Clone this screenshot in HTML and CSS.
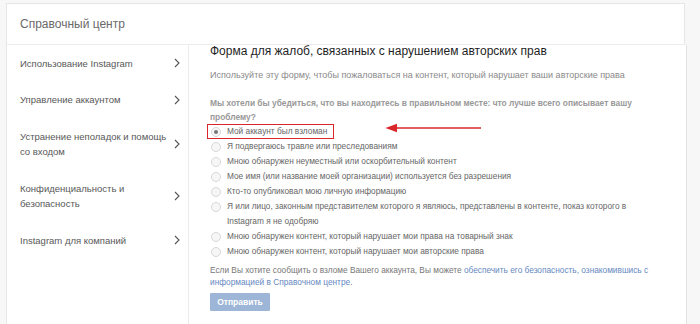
FILE: index.html
```html
<!DOCTYPE html>
<html lang="ru">
<head>
<meta charset="utf-8">
<link rel="stylesheet" href="styles.css">
</head>
<body>
<div class="page">
  <header class="top">Справочный центр</header>
  <div class="layout">
    <nav class="side">
      <a class="nav-item"><span>Использование Instagram</span><svg class="chev" viewBox="0 0 6 10"><path d="M1 1l4 4-4 4"/></svg></a>
      <a class="nav-item"><span>Управление аккаунтом</span><svg class="chev" viewBox="0 0 6 10"><path d="M1 1l4 4-4 4"/></svg></a>
      <a class="nav-item"><span>Устранение неполадок и помощь со входом</span><svg class="chev" viewBox="0 0 6 10"><path d="M1 1l4 4-4 4"/></svg></a>
      <a class="nav-item"><span>Конфиденциальность и безопасность</span><svg class="chev" viewBox="0 0 6 10"><path d="M1 1l4 4-4 4"/></svg></a>
      <a class="nav-item"><span>Instagram для компаний</span><svg class="chev" viewBox="0 0 6 10"><path d="M1 1l4 4-4 4"/></svg></a>
    </nav>
    <main class="main">
      <div class="content">
        <h1 class="title">Форма для жалоб, связанных с нарушением авторских прав</h1>
        <p class="lead">Используйте эту форму, чтобы пожаловаться на контент, который нарушает ваши авторские права</p>
        <p class="question">Мы хотели бы убедиться, что вы находитесь в правильном месте: что лучше всего описывает вашу проблему?</p>
        <ul class="options">
          <li class="opt opt-marked"><span class="radio checked"></span><span>Мой аккаунт был взломан</span></li>
          <li class="opt"><span class="radio"></span><span>Я подвергаюсь травле или преследованиям</span></li>
          <li class="opt"><span class="radio"></span><span>Мною обнаружен неуместный или оскорбительный контент</span></li>
          <li class="opt"><span class="radio"></span><span>Мое имя (или название моей организации) используется без разрешения</span></li>
          <li class="opt"><span class="radio"></span><span>Кто-то опубликовал мою личную информацию</span></li>
          <li class="opt"><span class="radio"></span><span>Я или лицо, законным представителем которого я являюсь, представлены в контенте, показ которого в Instagram я не одобряю</span></li>
          <li class="opt"><span class="radio"></span><span>Мною обнаружен контент, который нарушает мои права на товарный знак</span></li>
          <li class="opt"><span class="radio"></span><span>Мною обнаружен контент, который нарушает мои авторские права</span></li>
        </ul>
        <p class="note">Если Вы хотите сообщить о взломе Вашего аккаунта, Вы можете <a class="link">обеспечить его безопасность, ознакомившись с</a> <a class="link">информацией в Справочном центре</a>.</p>
        <button class="send" type="button">Отправить</button>
        <svg class="arrow" viewBox="0 0 96 12"><path d="M4 6H96" stroke="#d8262b" stroke-width="1.6" fill="none"/><path d="M0.5 6L12 1.8V10.2Z" fill="#d8262b"/></svg>
      </div>
    </main>
  </div>
</div>
</body>
</html>
```

FILE: styles.css
```css
* { box-sizing: border-box; }
html, body { margin: 0; padding: 0; }
body {
  background: #f7f7f7;
  font-family: "Liberation Sans", Arial, sans-serif;
  color: #555;
  width: 700px;
  height: 324px;
  overflow: hidden;
}
.page {
  padding: 3px 0 0 6px;
  width: 687px;
}
.top {
  height: 42px;
  background: #fff;
  border: 1px solid #e6e6e6;
  border-bottom: 1px solid #ececec;
  display: flex;
  align-items: center;
  padding-left: 13px;
  font-size: 12px;
  color: #6a6a6a;
  margin-right: 2px;
}
.layout {
  display: flex;
  background: #fff;
  border-left: 1px solid #e8e8e8;
  border-right: 1px solid #e2e2e2;
  height: 279px;
}
.side {
  width: 182px;
  border-right: 1px solid #ececec;
  padding: 10.5px 8px 0 13px;
  display: flex;
  flex-direction: column;
  gap: 21px;
}
.nav-item {
  display: flex;
  align-items: center;
  justify-content: space-between;
  font-size: 9.5px;
  line-height: 15.5px;
  color: #585858;
}
.nav-item span { max-width: 155px; }
.chev {
  width: 6px;
  height: 10px;
  fill: none;
  stroke: #555;
  stroke-width: 1.1;
  flex: none;
}
.main {
  flex: 1;
  padding-left: 21px;
}
.content {
  position: relative;
  width: 445px;
}
.title {
  margin: 0;
  font-size: 12px;
  line-height: 12px;
  font-weight: normal;
  color: #1f1f1f;
}
.lead {
  margin: 11px 0 0;
  font-size: 9px;
  line-height: 14px;
  color: #8a8a8a;
}
.question {
  margin: 14px 0 0;
  font-size: 8.4px;
  line-height: 14px;
  font-weight: bold;
  color: #999;
}
.options {
  list-style: none;
  margin: 0;
  padding: 0;
}
.opt {
  display: flex;
  align-items: flex-start;
  font-size: 8.3px;
  line-height: 15px;
  color: #666;
  padding-left: 1px;
}
.opt-marked {
  width: fit-content;
  outline: 1.5px solid #d8262b;
  outline-offset: -1px;
  padding: 0 7px 0 4px;
  margin-left: -3px;
}
.radio {
  flex: none;
  width: 10px;
  height: 10px;
  border-radius: 50%;
  border: 1px solid #d8d8d8;
  background: #f6f6f6;
  margin: 2.5px 6px 0 0;
  display: flex;
  align-items: center;
  justify-content: center;
}
.radio.checked::after {
  content: "";
  width: 4px;
  height: 4px;
  border-radius: 50%;
  background: #777;
}
.note {
  margin: 5px 0 0;
  font-size: 8.3px;
  line-height: 12px;
  color: #777;
}
.link { color: #6689c2; }
.send {
  display: block;
  margin-top: 5px;
  width: 60px;
  height: 18px;
  border: 0;
  border-radius: 1px;
  background: #9db5d6;
  color: #fff;
  font-family: "Liberation Sans", Arial, sans-serif;
  font-weight: bold;
  font-size: 8.5px;
  padding: 0;
}
.arrow {
  position: absolute;
  left: 175px;
  top: 77px;
  width: 96px;
  height: 12px;
}
```
